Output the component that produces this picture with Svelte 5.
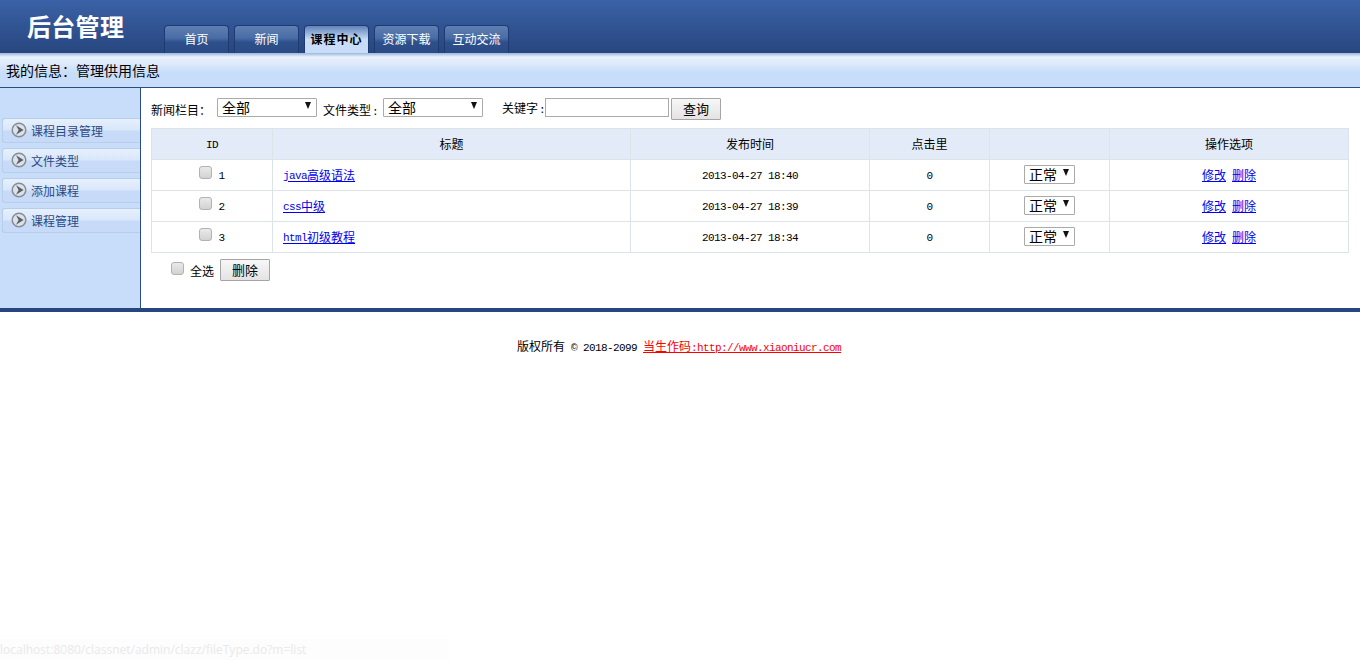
<script>
	let tabs = [
		{ name: '首页' },
		{ name: '新闻' },
		{ name: '课程中心', active: true },
		{ name: '资源下载' },
		{ name: '互动交流' }
	];
	let menu = ['课程目录管理', '文件类型', '添加课程', '课程管理'];
	let rows = [
		{ id: 1, lat: 'java', title: '高级语法', time: '2013-04-27 18:40' },
		{ id: 2, lat: 'css', title: '中级', time: '2013-04-27 18:39' },
		{ id: 3, lat: 'html', title: '初级教程', time: '2013-04-27 18:34' }
	];
</script>

<div class="page">
	<header class="top">
		<h1>后台管理</h1>
		<nav class="tabs">
			{#each tabs as t}
				<a href="#top" class="tab" class:active={t.active}>{t.name}</a>
			{/each}
		</nav>
	</header>

	<div class="info">我的信息：管理供用信息</div>

	<div class="main">
		<aside class="side">
			{#each menu as m}
				<a href="#top" class="item">
					<svg width="16" height="16" viewBox="0 0 16 16">
						<circle cx="8" cy="8" r="6.8" fill="#d9e2ee" stroke="#8a8d92" stroke-width="1.5" />
						<path d="M5 3.2 L12.6 8 L5 12.8 L7.6 8 Z" fill="#5f5f5f" />
					</svg>
					<span>{m}</span>
				</a>
			{/each}
		</aside>

		<section class="content">
			<form class="filter">
				<label class="lbl first" for="s1">新闻栏目：</label>
				<div class="sel wide"><select id="s1"><option>全部</option></select></div>
				<label class="lbl second" for="s2">文件类型<span class="colon">:</span></label>
				<div class="sel wide"><select id="s2"><option>全部</option></select></div>
				<label class="lbl third" for="kw">关键字<span class="colon">:</span></label>
				<input id="kw" class="kw" type="text" />
				<button type="button" class="btn search">查询</button>
			</form>

			<table>
				<colgroup>
					<col style="width:121px" /><col style="width:358px" /><col style="width:239px" />
					<col style="width:120px" /><col style="width:120px" /><col style="width:239px" />
				</colgroup>
				<thead>
					<tr>
						<th><span class="lat">ID</span></th>
						<th>标题</th>
						<th>发布时间</th>
						<th>点击里</th>
						<th></th>
						<th>操作选项</th>
					</tr>
				</thead>
				<tbody>
					{#each rows as r}
						<tr>
							<td><input type="checkbox" class="chk" /><span class="lat num">{r.id}</span></td>
							<td class="left"><a href="#top"><span class="lat">{r.lat}</span>{r.title}</a></td>
							<td><span class="lat">{r.time}</span></td>
							<td><span class="lat">0</span></td>
							<td><div class="sel small"><select><option>正常</option></select></div></td>
							<td class="ops"><a href="#top">修改</a><a href="#top">删除</a></td>
						</tr>
					{/each}
				</tbody>
			</table>

			<div class="bulk">
				<input type="checkbox" class="chk" />
				<span class="all">全选</span>
				<button type="button" class="btn del">删除</button>
			</div>
		</section>
	</div>

	<footer class="foot">
		<span>版权所有<span class="lat">{' '}© 2018-2099</span></span>
		<a href="#top">当生作码<span class="lat">:http://www.xiaoniucr.com</span></a>
	</footer>

	<div class="status">localhost:8080/classnet/admin/clazz/fileType.do?m=list</div>
</div>

<style>
	:global(body) {
		margin: 0;
		background: #fff;
	}

	.page {
		height: 660px;
		overflow: hidden;
		position: relative;
		font-family: "Noto Sans CJK SC", sans-serif;
		font-size: 12px;
		color: #000;
	}

	.lat {
		font-family: "Liberation Mono", monospace;
		font-size: 11px;
		letter-spacing: -0.6px;
		white-space: pre;
	}

	.top {
		height: 53px;
		display: flex;
		align-items: flex-end;
		background: linear-gradient(#3a62a6, #27467f);
	}

	h1 {
		margin: 0 40px 12px 27px;
		width: 97px;
		font-size: 24px;
		line-height: 30px;
		font-weight: 700;
		letter-spacing: 0.3px;
		color: #fff;
		white-space: nowrap;
	}

	.tabs {
		display: flex;
		gap: 5px;
	}

	.tab {
		width: 65px;
		height: 28px;
		box-sizing: border-box;
		border: 1px solid #1d3a72;
		border-bottom: none;
		border-radius: 4px 4px 0 0;
		background: linear-gradient(#5f7fb2 0, #486ca5 45%, #2d4f8b 60%, #2b4b85 100%);
		color: #fff;
		font-size: 12px;
		line-height: 26px;
		text-align: center;
		text-decoration: none;
	}

	.tab.active {
		background: linear-gradient(#5f82b8 0, #c9ddf8 50%, #c7dcf8 100%);
		color: #000;
		font-weight: 700;
		letter-spacing: 1px;
	}

	.info {
		height: 34px;
		border-bottom: 1px solid #2b4b86;
		background: linear-gradient(#9cb6da 0, #e9f2fd 4px, #e2edfb 8px, #c7ddf9 20px);
		padding-left: 6px;
		font-size: 14px;
		line-height: 34px;
	}

	.main {
		display: flex;
		height: 220px;
		border-bottom: 4px solid #27467f;
	}

	.side {
		width: 140px;
		flex: none;
		box-sizing: border-box;
		background: #c7ddf9;
		padding: 30px 0 0 2px;
		display: flex;
		flex-direction: column;
		gap: 5px;
	}

	.item {
		height: 25px;
		box-sizing: border-box;
		border: 1px solid #b7cde9;
		border-right: none;
		border-radius: 3px 0 0 3px;
		background: linear-gradient(#e6f0fd 0, #d9e7fa 48%, #c7dbf8 52%, #c7dbf8 100%);
		display: flex;
		align-items: center;
		gap: 4px;
		padding-left: 8px;
		color: #2a4a85;
		text-decoration: none;
		line-height: 24px;
	}

	.item svg {
		margin-top: -2px;
	}

	.content {
		flex: 1;
		border-left: 1px solid #2b4b86;
		padding: 10px 11px 0 10px;
	}

	.filter {
		display: flex;
		align-items: flex-start;
		height: 30px;
	}

	.lbl {
		line-height: 24px;
		white-space: nowrap;
		flex: none;
	}

	.first { width: 66px; }
	.second { margin-left: 6px; width: 54px; margin-right: 6px; }
	.third { margin-left: 19px; width: 43px; line-height: 20px; }

	.colon {
		font-family: "Liberation Mono", monospace;
		font-size: 11px;
		margin-left: 1px;
	}

	.sel {
		position: relative;
		display: inline-block;
		vertical-align: middle;
	}

	.sel::after {
		content: "";
		position: absolute;
		right: 6px;
		top: 4px;
		border-left: 3.5px solid transparent;
		border-right: 3.5px solid transparent;
		border-top: 7px solid #111;
		pointer-events: none;
	}

	.sel select {
		appearance: none;
		display: block;
		height: 19px;
		box-sizing: border-box;
		border: 1px solid #aaa;
		border-radius: 1px;
		background: #fff;
		padding: 0 0 0 4px;
		font-family: "Noto Sans CJK SC", sans-serif;
		font-size: 14px;
		line-height: 17px;
		color: #000;
	}

	.wide select { width: 100px; }
	.small select { width: 51px; }

	.kw {
		width: 124px;
		height: 19px;
		box-sizing: border-box;
		border: 1px solid #aaa;
		padding: 0 2px;
		outline: none;
		flex: none;
	}

	.btn {
		width: 50px;
		height: 22px;
		box-sizing: border-box;
		border: 1px solid #a5a5a5;
		border-radius: 1px;
		background: linear-gradient(#f7f7f7, #e3e3e3);
		padding: 0;
		font-family: "Noto Sans CJK SC", sans-serif;
		font-size: 13px;
		line-height: 20px;
		color: #000;
	}

	.search { margin-left: 2px; }

	table {
		width: 1197px;
		table-layout: fixed;
		border-collapse: collapse;
	}

	th, td {
		height: 31px;
		box-sizing: border-box;
		padding: 0;
		border: 1px solid #dce4ea;
		text-align: center;
		font-weight: 400;
		vertical-align: middle;
		line-height: 16px;
	}

	th { background: #e3ebf9; }

	th .lat, td .lat {
		vertical-align: 1px;
	}

	td.left {
		text-align: left;
		padding-left: 10px;
	}

	td a { color: #0000ee; }

	.ops a + a { margin-left: 6px; }

	.chk {
		appearance: none;
		width: 13px;
		height: 13px;
		margin: 0;
		box-sizing: border-box;
		border: 1px solid #b2b2b2;
		border-radius: 3px;
		background: linear-gradient(#eaeaea, #d2d2d2);
		vertical-align: 1px;
	}

	.num { margin-left: 6px; }

	td .sel { top: -1px; }

	.bulk {
		display: flex;
		align-items: flex-start;
		height: 30px;
		padding: 6px 0 0 20px;
	}

	.bulk .chk { margin: 3px 6px 0 0; }

	.all { line-height: 24px; width: 30px; }

	.foot {
		margin-top: 26px;
		padding-right: 2px;
		line-height: 16px;
		display: flex;
		justify-content: center;
		gap: 6px;
	}

	.foot a { color: #f00; }

	.status {
		position: absolute;
		left: 0;
		bottom: 0;
		width: 450px;
		height: 21px;
		background: #fdfdfd;
		border-radius: 0 4px 0 0;
		font-family: "Open Sans", sans-serif;
		font-size: 12px;
		line-height: 22px;
		color: #e9e9e9;
	}
</style>
